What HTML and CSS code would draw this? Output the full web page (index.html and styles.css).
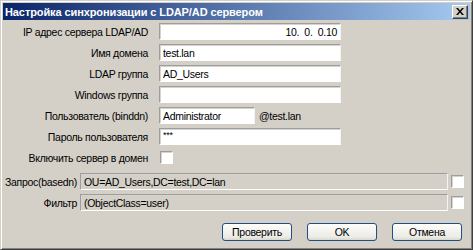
FILE: index.html
```html
<!DOCTYPE html>
<html lang="ru">
<head>
  <meta charset="UTF-8" />
  <title>Настройка синхронизации с LDAP/AD сервером</title>
  <link rel="stylesheet" href="styles.css">
</head>
<body>

  <div class="window">
    <div class="titlebar">
      <span class="title">Настройка синхронизации с LDAP/AD сервером</span>
      <button class="close-btn" title="Закрыть">
        <svg width="8" height="7" viewBox="0 0 8 7">
          <path d="M0 0h2l2 2.5L6 0h2L5 3.5 8 7H6L4 4.5 2 7H0l3-3.5z" fill="#000"/>
        </svg>
      </button>
    </div>

    <div class="dialog">
      <div class="main-form">
        <label>IP адрес сервера LDAP/AD</label>
        <div class="field ip-field">10.  0.  0.10</div>

        <label>Имя домена</label>
        <input type="text" class="field" value="test.lan">

        <label>LDAP группа</label>
        <input type="text" class="field" value="AD_Users">

        <label>Windows группа</label>
        <input type="text" class="field" value="">

        <label>Пользователь (binddn)</label>
        <div class="user-row">
          <input type="text" class="field user-field" value="Administrator">
          <span class="suffix">@test.lan</span>
        </div>

        <label>Пароль пользователя</label>
        <input type="text" class="field pass-field" value="***">

        <label>Включить сервер в домен</label>
        <div class="check-cell"><input type="checkbox" class="check"></div>
      </div>

      <div class="query-form">
        <label>Запрос(basedn)</label>
        <input type="text" class="field disabled" value="OU=AD_Users,DC=test,DC=lan" disabled>
        <input type="checkbox" class="check">

        <label>Фильтр</label>
        <input type="text" class="field disabled" value="(ObjectClass=user)" disabled>
        <input type="checkbox" class="check">
      </div>

      <div class="buttons">
        <button class="btn">Проверить</button>
        <button class="btn">OK</button>
        <button class="btn">Отмена</button>
      </div>
    </div>
  </div>

</body>
</html>
```

FILE: styles.css
```css
body {
  margin: 0;
  font-family: 'Liberation Sans', Arial, sans-serif;
  font-size: 10.5px;
  letter-spacing: -0.3px;
  color: #000;
  background: #d4d0c8;
}

.window {
  box-sizing: border-box;
  width: 473px;
  height: 250px;
  background: #d4d0c8;
  border: 1px solid;
  border-color: #d4d0c8 #404040 #404040 #d4d0c8;
  box-shadow: inset 1px 1px #fff, inset -1px -1px #808080;
  padding: 2px;
}

.titlebar {
  height: 17px;
  display: flex;
  align-items: center;
  justify-content: space-between;
  padding: 0 2px 0 2px;
  background: linear-gradient(to right, #0a246a, #a6caf0);
}

.title {
  color: #fff;
  font-weight: bold;
  font-size: 11px;
  letter-spacing: -0.1px;
  white-space: nowrap;
}

.close-btn {
  box-sizing: border-box;
  width: 16px;
  height: 14px;
  padding: 0;
  display: flex;
  align-items: center;
  justify-content: center;
  background: #d4d0c8;
  border: 1px solid;
  border-color: #fff #404040 #404040 #fff;
  box-shadow: inset -1px -1px #808080;
}

.dialog {
  padding: 3px 8px 0 0;
}

.main-form {
  display: grid;
  grid-template-columns: 145px 182px;
  grid-auto-rows: 17px;
  column-gap: 11px;
  row-gap: 4px;
  align-items: center;
}

.main-form label,
.query-form label {
  justify-self: end;
  white-space: nowrap;
}

.field {
  box-sizing: border-box;
  height: 17px;
  width: 100%;
  margin: 0;
  padding: 0 3px;
  font: inherit;
  letter-spacing: inherit;
  color: #000;
  background: #fff;
  border: 1px solid;
  border-color: #9d9d9d #f4f4f4 #fff #9d9d9d;
  box-shadow: inset 1px 1px #d6d3cc;
  outline: none;
}

.ip-field {
  display: flex;
  align-items: center;
  justify-content: flex-end;
  white-space: pre;
}

.user-row {
  display: flex;
  align-items: center;
}

.user-field {
  width: 96px;
}

.suffix {
  margin-left: 4px;
}

.pass-field {
  font-size: 9px;
  padding-bottom: 4px;
}

.check-cell {
  display: flex;
  align-items: center;
  padding-left: 1px;
}

.check {
  appearance: none;
  box-sizing: border-box;
  width: 13px;
  height: 13px;
  margin: 0;
  background: #fff;
  border: 1px solid;
  border-color: #9d9d9d #fff #fff #9d9d9d;
  box-shadow: inset 1px 1px #d6d3cc;
}

.query-form {
  display: grid;
  grid-template-columns: 74px 368px 13px;
  grid-auto-rows: 17px;
  column-gap: 3px;
  row-gap: 4px;
  align-items: center;
  margin-top: 7px;
}

.field.disabled {
  background: #d4d0c8;
  color: #000;
}

.buttons {
  display: flex;
  justify-content: flex-end;
  gap: 15px;
  margin-top: 12px;
}

.btn {
  box-sizing: border-box;
  width: 70px;
  height: 18px;
  padding: 0;
  font: inherit;
  letter-spacing: inherit;
  color: #000;
  background: linear-gradient(#fdfdfb, #ecebe6 80%, #d8d7ce);
  border: 1px solid #1f4f86;
  border-radius: 3px;
}
```
